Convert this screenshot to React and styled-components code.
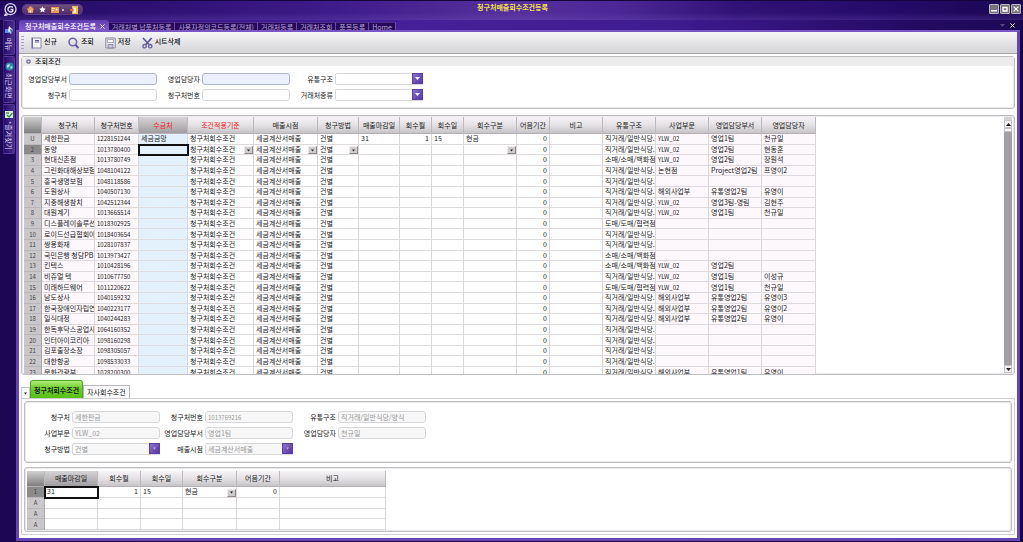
import React from 'react';
import styled, { createGlobalStyle, css } from 'styled-components';

const GlobalStyle = createGlobalStyle`
  *, *::before, *::after { box-sizing: border-box; }
  body { margin: 0; background: #1d0753; }
  body, button, input, select, table {
    font-family: "Noto Sans CJK KR", "Liberation Sans", sans-serif;
    font-size: 7px;
    line-height: 9px;
    color: #222;
  }
  button, input, select { margin: 0; padding: 0; border: 0; background: none; border-radius: 0; }
`;

const Shell = styled.div`
  display: flex;
  flex-direction: column;
  height: 100vh;
  overflow: hidden;
  background: linear-gradient(90deg, #1d0753, #230a61 50%, #15044a);
`;

/* ---------- title bar ---------- */
const TitleBar = styled.header`
  display: grid;
  grid-template-columns: 1fr auto 1fr;
  align-items: center;
  flex: none;
  height: 20px;
  padding: 0 2px 0 4px;
  border-top: 1px solid #16043f;
  background:
    linear-gradient(180deg, transparent 60%, rgba(124, 92, 200, 0.25)),
    linear-gradient(90deg, #220a60 0, #2c0f70 12%, #3d1b88 32%, #55309c 50%, #4c2896 60%, #311276 72%, #260b6a 86%, #1b0752 100%);
`;
const TitleLeft = styled.div`
  display: flex;
  align-items: center;
  gap: 5px;
  padding-bottom: 2px;
`;
const Pill = styled.div`
  display: flex;
  align-items: center;
  gap: 5px;
  height: 11px;
  padding: 0 5px;
  border-radius: 6px;
  background: linear-gradient(#765284, #4a2668);
  box-shadow: inset 0 0 0 1px #5d3c80;
`;
const PlainButton = styled.button`
  display: flex;
  align-items: center;
  justify-content: center;
`;
const Title = styled.h1`
  margin: 0;
  padding-bottom: 7px;
  font-size: 7px;
  line-height: 10px;
  font-weight: 700;
  color: #f2e24a;
`;
const WindowButtons = styled.div`
  display: flex;
  justify-content: flex-end;
  gap: 1px;
  padding-bottom: 4px;
`;
const WindowButton = styled(PlainButton)`
  width: 10px;
  height: 10px;
  border: 1px solid #b9b3bf;
  border-radius: 1px;
  background: #77727c;
`;

/* ---------- body ---------- */
const Body = styled.div`
  display: flex;
  flex: 1;
  min-height: 0;
  padding: 0 3px 1px 0;
`;
const Side = styled.nav`
  flex: none;
  display: flex;
  flex-direction: column;
  gap: 1px;
  width: 16px;
  padding: 0 1px 0 3px;
`;
const SideTab = styled.button`
  display: flex;
  flex-direction: column;
  align-items: center;
  gap: ${(p) => p.$gap}px;
  height: ${(p) => p.$h}px;
  padding-top: 5px;
  border: 1px solid #55389c;
  border-left-color: #3d2086;
  border-radius: 0 2px 2px 0;
  background: linear-gradient(90deg, #2a0d6b, #4a2d8c);
  color: #ddd4f2;
`;
const SideText = styled.span`
  writing-mode: vertical-rl;
  text-orientation: sideways;
  line-height: 10px;
`;

const Workspace = styled.div`
  display: flex;
  flex-direction: column;
  flex: 1;
  min-width: 0;
`;
const TabStrip = styled.div`
  display: flex;
  align-items: flex-end;
  flex: none;
  height: 10px;
  padding-left: 3px;
  background: linear-gradient(90deg, #36177e 0, #46209a 40%, #3f1b90 65%, #260b66 88%, #1d0853 100%);
`;
const PageTab = styled.button`
  height: 8px;
  padding: 0 3px;
  line-height: 6px;
  white-space: nowrap;
  color: #b3a3d6;
  background: #28095a;
  border-right: 1px solid #6a4ca8;
  border-top: 1px solid #4b2b8e;
  ${(p) => p.$active && css`
    display: flex;
    align-items: center;
    gap: 4px;
    height: 10px;
    padding: 2px 4px 0 6px;
    color: #fff;
    font-weight: 500;
    border: 0;
    border-radius: 3px 3px 0 0;
    background: linear-gradient(#5f3cae, #8058cc);
  `}
`;
const StripEnd = styled.div`
  display: flex;
  align-items: center;
  gap: 5px;
  height: 10px;
  margin-left: auto;
  padding-right: 5px;
`;
const Frame = styled.main`
  display: flex;
  flex-direction: column;
  flex: 1;
  min-height: 0;
  border: 3px solid #6544b4;
  border-top: 2px solid #7a55c4;
  background: #fff;
`;
const Toolbar = styled.div`
  display: flex;
  align-items: flex-start;
  gap: 11px;
  flex: none;
  height: 22px;
  padding: 4px 0 0 2px;
  border-bottom: 1px solid #a5a5a8;
  background: linear-gradient(#f6f6f6, #e8e8ea 40%, #d4d4d7);
`;
const Grip = styled.span`
  width: 3px;
  height: 15px;
  margin-right: -4px;
  background: repeating-linear-gradient(#a8a8b0 0 1px, transparent 1px 3px);
`;
const ToolButton = styled.button`
  display: flex;
  align-items: flex-start;
  gap: 2px;
  line-height: 10px;
  font-weight: 500;
  white-space: nowrap;
  color: #111;
  svg { margin-top: 1px; }
`;
const Content = styled.div`
  display: flex;
  flex-direction: column;
  flex: 1;
  min-height: 0;
  padding: 2px 2px 3px;
`;

/* ---------- panels and forms ---------- */
const Panel = styled.section`
  flex: none;
  border: 1px solid #bfbfc3;
  border-radius: 3px;
  background: #fff;
  box-shadow: inset 0 0 0 1px #e9e9eb;
`;
const PanelHead = styled.h2`
  display: flex;
  align-items: center;
  gap: 4px;
  height: 9px;
  margin: 0;
  padding-left: 4px;
  font-size: 7px;
  line-height: 9px;
  font-weight: 500;
  background: #ececec;
`;
const Form = styled.form`
  display: grid;
  grid-template-columns: repeat(3, 133px);
  row-gap: 4px;
  padding: ${(p) => p.$pad};
`;
const Field = styled.label`
  display: flex;
  align-items: center;
  justify-content: flex-end;
  gap: 2px;
  white-space: nowrap;
`;
const fieldBox = css`
  width: 88px;
  height: 12px;
  padding: 0 2px;
  line-height: 10px;
  border: 1px solid #d8d8dc;
  border-radius: 3px;
  background: #fff;
  &:disabled { color: #999; opacity: 1; background: #f7f7f7; }
`;
const TextInput = styled.input`
  ${fieldBox}
  ${(p) => p.$tinted && css`background: #ebeffb; border-color: #b0b6cc;`}
  ${(p) => p.$small && css`font-size: 6px;`}
`;
const SelectWrap = styled.span`
  position: relative;
  display: block;
`;
const SelectBox = styled.select`
  ${fieldBox}
  display: block;
  appearance: none;
  border-radius: 2px 0 0 2px;
`;
const SelectArrow = styled.span`
  position: absolute;
  top: 0;
  right: 0;
  display: flex;
  align-items: center;
  justify-content: center;
  width: 11px;
  height: 11px;
  pointer-events: none;
  background: linear-gradient(135deg, #8a74cc, #5334a4);
  border: 1px solid #5a40a4;
`;

/* ---------- grids ---------- */
const GridPanel = styled(Panel)`
  display: flex;
  justify-content: space-between;
  min-height: 0;
  overflow: hidden;
  padding: ${(p) => p.$pad};
  ${(p) => p.$grow && css`flex: 1; margin: 6px 0 5px;`}
`;
const Table = styled.table`
  flex: none;
  width: ${(p) => p.$w}px;
  height: ${(p) => p.$h}px;
  table-layout: fixed;
  border-collapse: separate;
  border-spacing: 0;
`;
const HeadCell = styled.th`
  height: ${(p) => p.$tall ? 17 : 16}px;
  padding: ${(p) => p.$tall ? 1 : 0}px 0 0;
  overflow: hidden;
  white-space: nowrap;
  font-weight: 400;
  color: ${(p) => (p.$red ? '#f0232c' : '#222')};
  border-right: 1px solid #bdb9bd;
  border-bottom: 1px solid #b4b0b4;
  background: ${(p) =>
    p.$corner ? 'linear-gradient(#d0d0d0, #7f7f7f)'
      : p.$dark ? 'linear-gradient(#d6d4d6, #a09ea0)'
        : 'linear-gradient(#f5f3f5, #e4e2e4 50%, #c6c4c6)'};
`;
const RowHead = styled.th`
  padding: 0;
  font-size: 6px;
  font-weight: 400;
  text-align: center;
  color: #444;
  border-right: 1px solid #a8a8a8;
  border-bottom: 1px solid #b8b6b8;
  background: ${(p) => (p.$active ? '#8b8b8b' : '#c9c7c9')};
`;
const tones = { pink: '#fdf8fc', blue: '#e3f1fc', white: '#fff' };
const Cell = styled.td`
  position: relative;
  padding: 0 2px;
  overflow: hidden;
  white-space: nowrap;
  color: #222;
  font-size: ${(p) => (p.$small ? 6 : 7)}px;
  text-align: ${(p) => p.$align || 'left'};
  border-right: 1px solid #dad6da;
  border-bottom: 1px solid #dedade;
  background: ${(p) => tones[p.$tone || 'white']};
  ${(p) => p.$active && css`background: #fff; outline: 2px solid #111; outline-offset: -1px; z-index: 1;`}
  ${(p) => p.$active && p.$tone === 'blue' && css`background: ${tones.blue};`}
`;
const CellInput = styled.input`
  display: block;
  width: 100%;
  height: 9px;
  outline: 0;
`;
const CellSelect = styled.select`
  display: block;
  width: 100%;
  height: 9px;
  appearance: none;
`;
const CellArrow = styled.span`
  position: absolute;
  right: 0;
  bottom: 0;
  display: flex;
  align-items: center;
  justify-content: center;
  width: 9px;
  height: 8px;
  pointer-events: none;
  border: 1px solid #8c8888;
  border-top-color: #eee;
  border-left-color: #eee;
  background: #d0cccc;
`;

const ScrollBar = styled.div`
  display: flex;
  flex-direction: column;
  flex: none;
  width: 8px;
  padding-top: 3px;
  background: linear-gradient(#d4d4d6 0 4px, #a2a0a4 4px);
`;
const ScrollButton = styled(PlainButton)`
  flex: none;
  width: 8px;
  height: 8px;
  border: 1px solid #c4c4c8;
  background: #f1f1f3;
`;
const ScrollThumb = styled.div`
  height: 4px;
  margin-bottom: auto;
  border: 1px solid #c4c4c8;
  background: #fafafa;
`;

/* ---------- detail area ---------- */
const DetailTabs = styled.div`
  display: flex;
  align-items: flex-end;
  flex: none;
  height: 18px;
`;
const TabMenu = styled(PlainButton)`
  width: 9px;
  height: 11px;
  border: 1px solid #c8c8cc;
  border-bottom: 0;
`;
const DetailTab = styled.button`
  height: 13px;
  padding: 0 3px;
  white-space: nowrap;
  border: 1px solid #b9b9bd;
  border-bottom: 0;
  background: #fafafa;
  ${(p) => p.$active && css`
    height: 18px;
    padding: 2px 3px 0;
    font-weight: 700;
    border-color: #56a51f;
    border-radius: 3px 3px 0 0;
    background: linear-gradient(#b4ec7c, #6fd02c 40%, #55bf18);
  `}
`;
const Detail = styled.div`
  display: flex;
  flex-direction: column;
  gap: 4px;
  flex: none;
  padding: 2px;
  border: 1px solid #cfcfd3;
`;

/* ---------- drawings ---------- */
const Down = ({ color = '#222', w = 5 }) => (
  <svg width={w} height="3" viewBox="0 0 5 3"><path d="M0 0h5L2.5 3z" fill={color} /></svg>
);
const Up = () => <svg width="5" height="3" viewBox="0 0 5 3"><path d="M0 3h5L2.5 0z" fill="#111" /></svg>;
const Cross = ({ size = 5, color = '#fff' }) => (
  <svg width={size} height={size} viewBox="0 0 6 6"><path d="M.6.6l4.8 4.8M5.4.6L.6 5.4" stroke={color} strokeWidth="1.2" /></svg>
);
const Logo = () => (
  <svg width="13" height="13" viewBox="0 0 13 13" fill="none">
    <circle cx="6.5" cy="6.2" r="5.5" stroke="#d9d3ec" strokeWidth="1.3" />
    <path d="M8.8 4.4C7.4 2.9 3.9 3.6 3.9 6.3c0 2.8 3.7 3.4 4.9 1.7V6.5H6.5M1.7 10.4l-.8 2 2.8-.8" stroke="#e9e5f6" strokeWidth="1.4" />
  </svg>
);
const HomeIcon = () => (
  <svg width="7" height="7" viewBox="0 0 8 8"><path d="M0 4l4-3.6L8 4H7v3.6H1V4z" fill="#f0a060" /><path d="M0 4l4-3.6L8 4" fill="none" stroke="#e98a4a" /><path d="M3.2 5h1.6v2.6H3.2z" fill="#fff0d8" /></svg>
);
const StarIcon = () => (
  <svg width="7" height="7" viewBox="0 0 8 8"><path d="M4 .3l1.1 2.4 2.6.3-1.9 1.8.5 2.6L4 6.1 1.7 7.4l.5-2.6L.3 3l2.6-.3z" fill="#fff" /></svg>
);
const BoxIcon = () => (
  <svg width="14" height="8" viewBox="0 0 14 8"><path d="M0 1h8v6H0z" fill="#e99a4a" /><path d="M1 2h3v1H1zm0 2h2v1H1zm4-2l2 1.5L5 5z" fill="#fff3cf" /><circle cx="12" cy="4" r="1" fill="#e8def2" /></svg>
);
const DoorIcon = () => (
  <svg width="8" height="8" viewBox="0 0 8 8"><path d="M2 0h6v8H2z" fill="#e7b95c" /><path d="M3.5 1.2l2.5.5v5l-2.5.5z" fill="#fff4c8" /><path d="M0 3h2V1.8L4 4 2 6V5H0z" fill="#d96b2c" /></svg>
);
const MenuIcon = () => (
  <svg width="9" height="9" viewBox="0 0 9 9"><path d="M0 3h4v4H0z" fill="#5b8fe0" /><path d="M4 0l4 4-2 4-3-3z" fill="#e4edff" /><path d="M5 3l3 1-2 4z" fill="#3867c4" /></svg>
);
const GlobeIcon = () => (
  <svg width="9" height="9" viewBox="0 0 9 9"><circle cx="4.5" cy="4.5" r="4" fill="#2d88a8" /><path d="M2 3l2-1 1 1-1 2-2 1zM5 5l2-1 .5 1.5L6 7z" fill="#a7e4e2" /></svg>
);
const FavoriteIcon = () => (
  <svg width="9" height="9" viewBox="0 0 9 9"><path d="M0 1h8v7H0z" fill="#d6ebd9" /><path d="M1 2h3v2H1z" fill="#6fae5c" /><path d="M7.5 3L4 7 2 5" fill="none" stroke="#2f9446" strokeWidth="1.2" /></svg>
);
const NewIcon = () => (
  <svg width="11" height="12" viewBox="0 0 11 12"><path d="M1.5 1h8.5v10H1.5z" fill="#f6f5fb" stroke="#8a86a8" /><path d="M1.2 .5v11" stroke="#6a62a0" strokeWidth="1.4" /><path d="M4 3.5h4M4 5h4" stroke="#5d5598" strokeWidth="1.1" /></svg>
);
const SearchIcon = () => (
  <svg width="11" height="12" viewBox="0 0 11 12" fill="none"><circle cx="4.8" cy="5" r="3.8" stroke="#7068a8" strokeWidth="1.6" /><path d="M7.5 7.8l2.9 3.2" stroke="#5b5396" strokeWidth="1.9" /></svg>
);
const SaveIcon = () => (
  <svg width="11" height="12" viewBox="0 0 11 12"><path d="M.8 1h9.4v10H.8z" fill="#e8e7ee" stroke="#8e8b9c" /><path d="M2.5 2.5h6v3h-6z" fill="#fff" stroke="#8e8b9c" strokeWidth=".7" /><path d="M3 7.5h5V11H3z" fill="#c7c4d4" stroke="#77738c" strokeWidth=".7" /></svg>
);
const CutIcon = () => (
  <svg width="11" height="12" viewBox="0 0 11 12" fill="none"><path d="M1 1l6.4 7M9.6 1L3.4 8" stroke="#5d559a" strokeWidth="1.7" /><circle cx="2.6" cy="9.2" r="1.7" stroke="#6a62a8" strokeWidth="1.4" /><circle cx="8.2" cy="9.2" r="1.7" stroke="#6a62a8" strokeWidth="1.4" /></svg>
);
const BulletIcon = () => (
  <svg width="5" height="5" viewBox="0 0 5 5"><circle cx="2.5" cy="2.5" r="1.7" fill="#fff" stroke="#7a70b4" strokeWidth="1.3" /></svg>
);

/* ---------- data ---------- */
const columns = [
  ['청구처', 53], ['청구처번호', 44], ['수금처', 49], ['조건적용기준', 66], ['매출시점', 64],
  ['청구방법', 41], ['매출마감일', 41], ['회수월', 32], ['회수일', 32], ['회수구분', 53],
  ['어음기간', 33], ['비고', 53], ['유통구조', 53], ['사업부문', 53], ['영업담당부서', 53], ['영업담당자', 54],
];
const D = '직거래/일반식당.';
const S = '소매/소매/백화점';
const W = '도매/도매/협력점';
const rows = [
  ['U', '세한판금', '1228151244', D, 'YLW_02', '영업1팀', '천규일'],
  ['2', '동양', '1013780400', D, 'YLW_02', '영업2팀', '현동훈'],
  ['3', '현대신촌점', '1013780749', S, 'YLW_02', '영업2팀', '장원석'],
  ['4', '그린화대해상보험', '1048104122', D, '논현점', 'Project영업2팀', '프영이2'],
  ['5', '흥국생명보험', '1048118586', D],
  ['6', '도원상사', '1040507130', D, '해외사업부', '유통영업2팀', '유영이'],
  ['7', '지중해생참치', '1042512344', D, 'YLW_02', '영업3팀-영림', '김현주'],
  ['8', '대원계기', '1013665514', D, 'YLW_02', '영업1팀', '천규일'],
  ['9', '디스플레이솔루션', '1018302925', W],
  ['10', '로이드선급협회아', '1018403654', D],
  ['11', '쌍용화재', '1028107837', D],
  ['12', '국민은행 청담PB', '1013973427', S],
  ['13', '킨텍스', '1010428196', S, 'YLW_02', '영업2팀', ''],
  ['14', '비쥬얼 텍', '1010677750', D, 'YLW_02', '영업1팀', '이성규'],
  ['15', '미래하드웨어', '1011220622', W, 'YLW_02', '영업1팀', '천규일'],
  ['16', '남도상사', '1040159232', D, '해외사업부', '유통영업2팀', '유영이3'],
  ['17', '한국장애인자립연', '1040223177', D, '해외사업부', '유통영업2팀', '유영이2'],
  ['18', '일식대정', '1040244283', D, '해외사업부', '유통영업2팀', '유영이'],
  ['19', '한독후닥스공업사', '1064160352', D],
  ['20', '인터아이코리아', '1098160298', D],
  ['21', '김포출장소장', '1098305057', D],
  ['22', '대한항공', '1098533033', D],
  ['23', '문화관광부', '1028200300', D, '해외사업부', '유통영업1팀', '유영이'],
];
const detailColumns = [['매출마감일', 53], ['회수월', 43], ['회수일', 42], ['회수구분', 54], ['어음기간', 43], ['비고', 106]];

function Choice({ text, label, open }) {
  if (!open) return text;
  return (
    <>
      <CellSelect aria-label={label}><option>{text}</option></CellSelect>
      <CellArrow><Down w={3} /></CellArrow>
    </>
  );
}

function DropDown({ label, value = '', disabled }) {
  return (
    <Field>
      {label}
      <SelectWrap>
        <SelectBox disabled={disabled}><option>{value}</option></SelectBox>
        <SelectArrow><Down color={disabled ? '#b9abe2' : '#fff'} w={disabled ? 3 : 5} /></SelectArrow>
      </SelectWrap>
    </Field>
  );
}

function MainGrid() {
  return (
    <Table $w={792} $h={261}>
      <colgroup>
        <col width="18" />
        {columns.map(([name, w]) => <col key={name} width={w} />)}
      </colgroup>
      <thead>
        <tr>
          <HeadCell $tall $corner />
          {columns.map(([name], i) => (
            <HeadCell key={name} scope="col" $tall $red={i === 2 || i === 3} $dark={i === 2}>{name}</HeadCell>
          ))}
        </tr>
      </thead>
      <tbody>
        {rows.map(([no, name, code, route, unit = '', dept = '', owner = ''], i) => {
          const first = i === 0;
          const current = i === 1;
          return (
            <tr key={code}>
              <RowHead scope="row" $active={current}>{no}</RowHead>
              <Cell $tone="pink">{name}</Cell>
              <Cell $tone="pink" $small>{code}</Cell>
              <Cell $tone="blue" $active={current}>
                {current ? <CellInput aria-label="수금처" /> : first && '세금금망'}
              </Cell>
              <Cell><Choice text="청구처회수조건" label="조건적용기준" open={current} /></Cell>
              <Cell><Choice text="세금계산서매출" label="매출시점" open={current} /></Cell>
              <Cell><Choice text="건별" label="청구방법" open={current} /></Cell>
              <Cell>{first && '31'}</Cell>
              <Cell $align="right">{first && '1'}</Cell>
              <Cell>{first && '15'}</Cell>
              <Cell><Choice text={first ? '현금' : ''} label="회수구분" open={current} /></Cell>
              <Cell $align="right">0</Cell>
              <Cell />
              <Cell>{route}</Cell>
              <Cell $tone="pink" $small={unit === 'YLW_02'}>{unit}</Cell>
              <Cell $tone="pink">{dept}</Cell>
              <Cell $tone="pink">{owner}</Cell>
            </tr>
          );
        })}
      </tbody>
    </Table>
  );
}

function DetailGrid() {
  return (
    <Table $w={359} $h={59}>
      <colgroup>
        <col width="18" />
        {detailColumns.map(([name, w]) => <col key={name} width={w} />)}
      </colgroup>
      <thead>
        <tr>
          <HeadCell $corner />
          {detailColumns.map(([name], i) => <HeadCell key={name} scope="col" $dark={i === 0}>{name}</HeadCell>)}
        </tr>
      </thead>
      <tbody>
        <tr>
          <RowHead scope="row" $active>1</RowHead>
          <Cell $active><CellInput aria-label="매출마감일" defaultValue="31" /></Cell>
          <Cell $align="right">1</Cell>
          <Cell>15</Cell>
          <Cell><Choice text="현금" label="회수구분" open /></Cell>
          <Cell $align="right">0</Cell>
          <Cell />
        </tr>
        {[1, 2, 3].map((n) => (
          <tr key={n}>
            <RowHead scope="row">A</RowHead>
            {detailColumns.map(([name]) => <Cell key={name} />)}
          </tr>
        ))}
      </tbody>
    </Table>
  );
}

export default function App() {
  return (
    <Shell>
      <GlobalStyle />
      <TitleBar>
        <TitleLeft>
          <Logo />
          <Pill>
            <PlainButton aria-label="홈"><HomeIcon /></PlainButton>
            <PlainButton aria-label="즐겨찾기"><StarIcon /></PlainButton>
            <PlainButton aria-label="창"><BoxIcon /></PlainButton>
            <PlainButton aria-label="종료"><DoorIcon /></PlainButton>
          </Pill>
        </TitleLeft>
        <Title>청구처매출회수조건등록</Title>
        <WindowButtons>
          <WindowButton aria-label="최소화"><svg width="8" height="8"><path d="M1 5h6v1.5H1z" fill="#fff" /></svg></WindowButton>
          <WindowButton aria-label="최대화"><svg width="8" height="8"><path d="M2 2.5h4v3.5H2z" fill="none" stroke="#fff" strokeWidth="1.4" /></svg></WindowButton>
          <WindowButton aria-label="닫기"><Cross size={6} /></WindowButton>
        </WindowButtons>
      </TitleBar>
      <Body>
        <Side>
          <SideTab $h={35} $gap={3}><MenuIcon /><SideText>메뉴</SideText></SideTab>
          <SideTab $h={47} $gap={2}><GlobeIcon /><SideText>최근화면</SideText></SideTab>
          <SideTab $h={50} $gap={2}><FavoriteIcon /><SideText>*즐겨찾기</SideText></SideTab>
        </Side>
        <Workspace>
          <TabStrip>
            <PageTab $active>청구처매출회수조건등록 <Cross size={5} /></PageTab>
            <PageTab>거래처별 납품처등록</PageTab>
            <PageTab>사용자정의코드등록(전체)</PageTab>
            <PageTab>거래처등록</PageTab>
            <PageTab>거래처조회</PageTab>
            <PageTab>품목등록</PageTab>
            <PageTab>Home</PageTab>
            <StripEnd>
              <PlainButton aria-label="탭 목록"><Down color="#5a4a80" /></PlainButton>
              <PlainButton aria-label="탭 닫기"><Cross size={5} /></PlainButton>
            </StripEnd>
          </TabStrip>
          <Frame>
            <Toolbar>
              <Grip />
              <ToolButton><NewIcon />신규</ToolButton>
              <ToolButton><SearchIcon />조회</ToolButton>
              <ToolButton><SaveIcon />저장</ToolButton>
              <ToolButton><CutIcon />시트삭제</ToolButton>
            </Toolbar>
            <Content>
              <Panel>
                <PanelHead><BulletIcon />조회조건</PanelHead>
                <Form $pad="7px 2px">
                  <Field>영업담당부서<TextInput $tinted /></Field>
                  <Field>영업담당자<TextInput $tinted /></Field>
                  <DropDown label="유통구조" />
                  <Field>청구처<TextInput /></Field>
                  <Field>청구처번호<TextInput /></Field>
                  <DropDown label="거래처종류" />
                </Form>
              </Panel>
              <GridPanel $grow $pad="1px 2px">
                <MainGrid />
                <ScrollBar>
                  <ScrollButton aria-label="위로"><Up /></ScrollButton>
                  <ScrollThumb />
                  <ScrollButton aria-label="아래로"><Down /></ScrollButton>
                </ScrollBar>
              </GridPanel>
              <DetailTabs>
                <TabMenu aria-label="탭 메뉴"><Down w={3} /></TabMenu>
                <DetailTab $active>청구처회수조건</DetailTab>
                <DetailTab>자사회수조건</DetailTab>
              </DetailTabs>
              <Detail>
                <Panel>
                  <Form $pad="9px 2px 7px">
                    <Field>청구처<TextInput disabled defaultValue="세한판금" /></Field>
                    <Field>청구처번호<TextInput disabled $small defaultValue="1013769216" /></Field>
                    <Field>유통구조<TextInput disabled defaultValue="직거래/일반식당/양식" /></Field>
                    <Field>사업부문<TextInput disabled defaultValue="YLW_02" /></Field>
                    <Field>영업담당부서<TextInput disabled defaultValue="영업1팀" /></Field>
                    <Field>영업담당자<TextInput disabled defaultValue="천규일" /></Field>
                    <DropDown label="청구방법" value="건별" disabled />
                    <DropDown label="매출시점" value="세금계산서매출" disabled />
                  </Form>
                </Panel>
                <GridPanel $pad="3px 2px 1px">
                  <DetailGrid />
                </GridPanel>
              </Detail>
            </Content>
          </Frame>
        </Workspace>
      </Body>
    </Shell>
  );
}
